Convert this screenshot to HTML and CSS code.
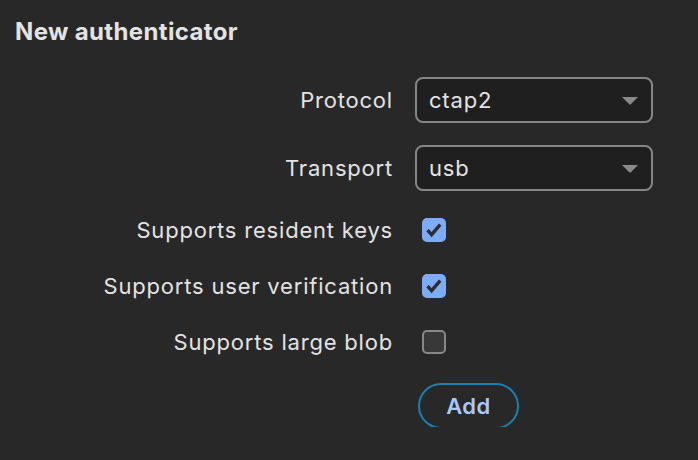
FILE: index.html
```html
<!DOCTYPE html>
<html>
<head>
<meta charset="utf-8">
<link rel="stylesheet" href="styles.css">
</head>
<body>
<div class="panel">
  <h1 class="title">New authenticator</h1>
  <div class="form">
    <div class="label">Protocol</div>
    <div class="field">
      <div class="select"><span>ctap2</span><span class="arrow"></span></div>
    </div>
    <div class="label">Transport</div>
    <div class="field">
      <div class="select"><span>usb</span><span class="arrow"></span></div>
    </div>
    <div class="label row-check">Supports resident keys</div>
    <div class="field row-check">
      <span class="check on"><svg viewBox="0 0 24 24" width="24" height="24"><path d="M5.5 12.2 L9.6 16.6 L18.2 6.6" fill="none" stroke="#2b2d31" stroke-width="3.4" stroke-linejoin="miter"/></svg></span>
    </div>
    <div class="label row-check">Supports user verification</div>
    <div class="field row-check">
      <span class="check on"><svg viewBox="0 0 24 24" width="24" height="24"><path d="M5.5 12.2 L9.6 16.6 L18.2 6.6" fill="none" stroke="#2b2d31" stroke-width="3.4" stroke-linejoin="miter"/></svg></span>
    </div>
    <div class="label row-check">Supports large blob</div>
    <div class="field row-check">
      <span class="check off"></span>
    </div>
    <div class="label"></div>
    <div class="field">
      <button class="add">Add</button>
    </div>
  </div>
</div>
</body>
</html>
```
FILE: styles.css
```css
html, body {
  margin: 0;
  padding: 0;
  background: #282828;
}
body {
  font-family: Inter, "Liberation Sans", sans-serif;
  color: #e3e3e3;
}
.panel {
  padding: 16px 0 0 15px;
}
.title {
  margin: 0;
  font-size: 24px;
  font-weight: 700;
  line-height: 32px;
  letter-spacing: 0.35px;
  color: #e3e3e3;
}
.form {
  margin-top: 29px;
  display: grid;
  grid-template-columns: 378px 238px;
  column-gap: 22px;
  row-gap: 22px;
}
.label {
  font-size: 22px;
  letter-spacing: 0.8px;
  text-align: right;
  display: flex;
  align-items: center;
  justify-content: flex-end;
  height: 46px;
}
.field {
  display: flex;
  align-items: center;
  height: 46px;
}
.row-check {
  height: 34px;
}
.select {
  box-sizing: border-box;
  width: 238px;
  height: 46px;
  border: 2px solid #868686;
  border-radius: 8px;
  background: #1f1f1f;
  display: flex;
  align-items: center;
  justify-content: space-between;
  padding: 0 13px 0 12px;
  font-size: 22px;
  letter-spacing: 0.8px;
  color: #e3e3e3;
}
.arrow {
  width: 0;
  height: 0;
  border-left: 8px solid transparent;
  border-right: 8px solid transparent;
  border-top: 8px solid #8a8a8a;
  margin-top: 1px;
}
.check {
  box-sizing: border-box;
  width: 24px;
  height: 24px;
  margin-left: 7px;
  border-radius: 5px;
  display: block;
}
.check svg {
  display: block;
}
.check.on {
  background: #7cacf8;
}
.check.off {
  border: 2px solid #878787;
  background: #383838;
}
.add {
  margin-left: 3px;
  margin-top: 3px;
  box-sizing: border-box;
  width: 101px;
  height: 46px;
  border: 2px solid #1b7fb0;
  border-radius: 23px;
  background: transparent;
  color: #a8c7fa;
  font-family: Inter, "Liberation Sans", sans-serif;
  font-size: 22px;
  font-weight: 600;
  letter-spacing: 0.5px;
  padding: 0;
}
```
